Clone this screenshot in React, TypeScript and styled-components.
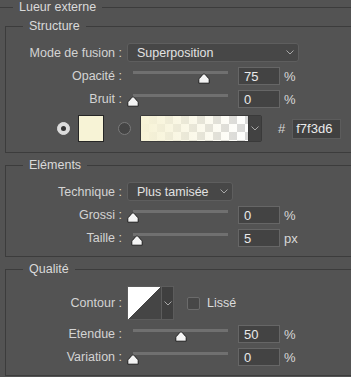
import React from "react"
import styled, { createGlobalStyle } from "styled-components"

const GlobalStyle = createGlobalStyle`
  html, body {
    margin: 0;
    padding: 0;
    height: 100%;
    overflow: hidden;
    background: #535353;
  }
  body {
    font-family: "Liberation Sans", Arial, sans-serif;
    font-size: 12.5px;
    color: #d4d4d4;
  }
`

const LINE = "#3c3c3c"

const Panel = styled.fieldset`
  margin: 0;
  padding: 0;
  min-width: 0;
  border: none;
  border-top: 1px solid ${LINE};
`

const PanelTitle = styled.legend`
  margin-left: 13px;
  padding: 0 6px;
  line-height: 14px;
  color: #dadada;
`

// groups run off the right side of the panel, so no right border shows
const Group = styled.fieldset<{ $bottom?: number }>`
  margin: 5px 0 0 5px;
  min-width: 0;
  border: 1px solid ${LINE};
  border-right: none;
  padding: 10px 0 ${(p) => p.$bottom ?? 9}px 0;
  display: flex;
  flex-direction: column;
  gap: 5px;
`

const GroupTitle = styled.legend`
  margin-left: 17px;
  padding: 0 6px;
  line-height: 14px;
  color: #dadada;
`

const Row = styled.div<{ $top?: number }>`
  display: flex;
  align-items: center;
  margin-top: ${(p) => p.$top ?? 0}px;
`

const Label = styled.span`
  flex-shrink: 0;
  width: 116px;
  margin-right: 5px;
  text-align: right;
  white-space: nowrap;
`

const Spacer = styled.span<{ $w: number }>`
  width: ${(p) => p.$w}px;
  flex-shrink: 0;
`

const Select = styled.div<{ $width: number }>`
  box-sizing: border-box;
  width: ${(p) => p.$width}px;
  height: 19px;
  display: flex;
  align-items: center;
  justify-content: space-between;
  padding: 0 4px 0 9px;
  background: #474747;
  border: 1px solid #5e5e5e;
  border-radius: 3px;
  color: #e2e2e2;
`

const Chevron = () => (
  <svg width="8" height="5" viewBox="0 0 8 5">
    <polyline points="0.5,0.5 4,4 7.5,0.5" fill="none" stroke="#a8a8a8" strokeWidth="1" />
  </svg>
)

const SliderBox = styled.div`
  position: relative;
  width: 101px;
  height: 18px;
  flex-shrink: 0;
`

const Track = styled.div`
  margin: 4px 0 0 6px;
  height: 3px;
  background: #707070;
`

const ThumbShape = styled.svg`
  position: absolute;
  top: 6px;
`

const Thumb = ({ pos }: { pos: number }) => (
  <ThumbShape width="12" height="11" viewBox="0 0 12 11" style={{ left: 6 + pos * 95 - 6 }}>
    <path
      d="M6 0.8 C6.6 0.8 7 1.2 7.4 1.7 L10.8 5.6 C11.1 6 11.2 6.3 11.2 6.8 L11.2 10.2 L0.8 10.2 L0.8 6.8 C0.8 6.3 0.9 6 1.2 5.6 L4.6 1.7 C5 1.2 5.4 0.8 6 0.8 Z"
      fill="#f4f4f4"
      stroke="#1e1e1e"
      strokeWidth="1"
    />
  </ThumbShape>
)

const Field = styled.div<{ $width?: number; $height?: number }>`
  box-sizing: border-box;
  width: ${(p) => p.$width ?? 42}px;
  height: ${(p) => p.$height ?? 18}px;
  margin-left: 10px;
  padding-left: 5px;
  display: flex;
  align-items: center;
  background: #434343;
  border: 1px solid #666666;
  color: #eaeaea;
  font-size: 13px;
`

const Unit = styled.span`
  margin-left: 4px;
  font-size: 13px;
  color: #d8d8d8;
`

const Radio = styled.span<{ $on?: boolean }>`
  box-sizing: border-box;
  width: 13px;
  height: 13px;
  border-radius: 50%;
  flex-shrink: 0;
  display: flex;
  align-items: center;
  justify-content: center;
  background: ${(p) => (p.$on ? "#dcdcdc" : "#454545")};
  border: 1px solid ${(p) => (p.$on ? "#dcdcdc" : "#7a7a7a")};
  &::after {
    content: "";
    width: 5px;
    height: 5px;
    border-radius: 50%;
    background: #333333;
    display: ${(p) => (p.$on ? "block" : "none")};
  }
`

const Swatch = styled.div`
  box-sizing: border-box;
  width: 26px;
  height: 27px;
  margin-left: 8px;
  background: #f7f3d6;
  border: 1px solid #262626;
`

const GradientPicker = styled.div`
  box-sizing: border-box;
  display: flex;
  height: 27px;
  margin-left: 9px;
  border: 1px solid #3a3a3a;
  border-radius: 2px;
  overflow: hidden;
`

const GradientBar = styled.div`
  width: 107px;
  background:
    linear-gradient(to right, #f7f3d6, rgba(247, 243, 214, 0)),
    repeating-conic-gradient(#d9d9d9 0 25%, #ffffff 0 50%) 0 0 / 16px 16px;
`

const DropButton = styled.div`
  width: 12px;
  display: flex;
  align-items: center;
  justify-content: center;
  background: #424242;
  border-left: 1px solid #3a3a3a;
`

const Hash = styled.span`
  margin-left: 16px;
  font-size: 13px;
`

const HexField = styled(Field)`
  margin-left: 7px;
  padding-left: 3px;
  background: #404040;
  border-color: #5c5c5c;
`

const ContourPicker = styled.div`
  box-sizing: border-box;
  display: flex;
  width: 47px;
  height: 34px;
  border: 1px solid #5c5c5c;
`

const ContourPreview = styled.div`
  flex: 1;
  background: linear-gradient(to bottom right, #ffffff 50%, #454545 50%);
`

const ContourDrop = styled(DropButton)`
  width: 11px;
  background: #3f3f3f;
  border-left: 1px solid #5c5c5c;
`

const Check = styled.span`
  box-sizing: border-box;
  width: 13px;
  height: 13px;
  margin-left: 13px;
  border: 1px solid #6b6b6b;
  border-radius: 2px;
  background: #474747;
`

const CheckLabel = styled.span`
  margin-left: 7px;
  color: #dcdcdc;
`

const SliderRow = ({
  label,
  value,
  pos,
  unit,
}: {
  label: string
  value: string
  pos: number
  unit: string
}) => (
  <Row>
    <Label>{label}</Label>
    <SliderBox>
      <Track />
      <Thumb pos={pos} />
    </SliderBox>
    <Field>{value}</Field>
    <Unit>{unit}</Unit>
  </Row>
)

export default function App() {
  return (
    <>
      <GlobalStyle />
      <Panel>
        <PanelTitle>Lueur externe</PanelTitle>

        <Group $bottom={10}>
          <GroupTitle>Structure</GroupTitle>
          <Row>
            <Label>Mode de fusion :</Label>
            <Select $width={172}>
              <span>Superposition</span>
              <Chevron />
            </Select>
          </Row>
          <SliderRow label="Opacité :" value="75" pos={0.75} unit="%" />
          <SliderRow label="Bruit :" value="0" pos={0} unit="%" />
          <Row $top={2}>
            <Spacer $w={51} />
            <Radio $on />
            <Swatch />
            <Spacer $w={14} />
            <Radio />
            <GradientPicker>
              <GradientBar />
              <DropButton>
                <Chevron />
              </DropButton>
            </GradientPicker>
            <Hash>#</Hash>
            <HexField $width={49} $height={20}>
              f7f3d6
            </HexField>
          </Row>
        </Group>

        <Group>
          <GroupTitle>Eléments</GroupTitle>
          <Row>
            <Label>Technique :</Label>
            <Select $width={106}>
              <span>Plus tamisée</span>
              <Chevron />
            </Select>
          </Row>
          <SliderRow label="Grossi :" value="0" pos={0} unit="%" />
          <SliderRow label="Taille :" value="5" pos={0.045} unit="px" />
        </Group>

        <Group>
          <GroupTitle>Qualité</GroupTitle>
          <Row>
            <Label>Contour :</Label>
            <ContourPicker>
              <ContourPreview />
              <ContourDrop>
                <Chevron />
              </ContourDrop>
            </ContourPicker>
            <Check />
            <CheckLabel>Lissé</CheckLabel>
          </Row>
          <SliderRow label="Etendue :" value="50" pos={0.5} unit="%" />
          <SliderRow label="Variation :" value="0" pos={0} unit="%" />
        </Group>
      </Panel>
    </>
  )
}
